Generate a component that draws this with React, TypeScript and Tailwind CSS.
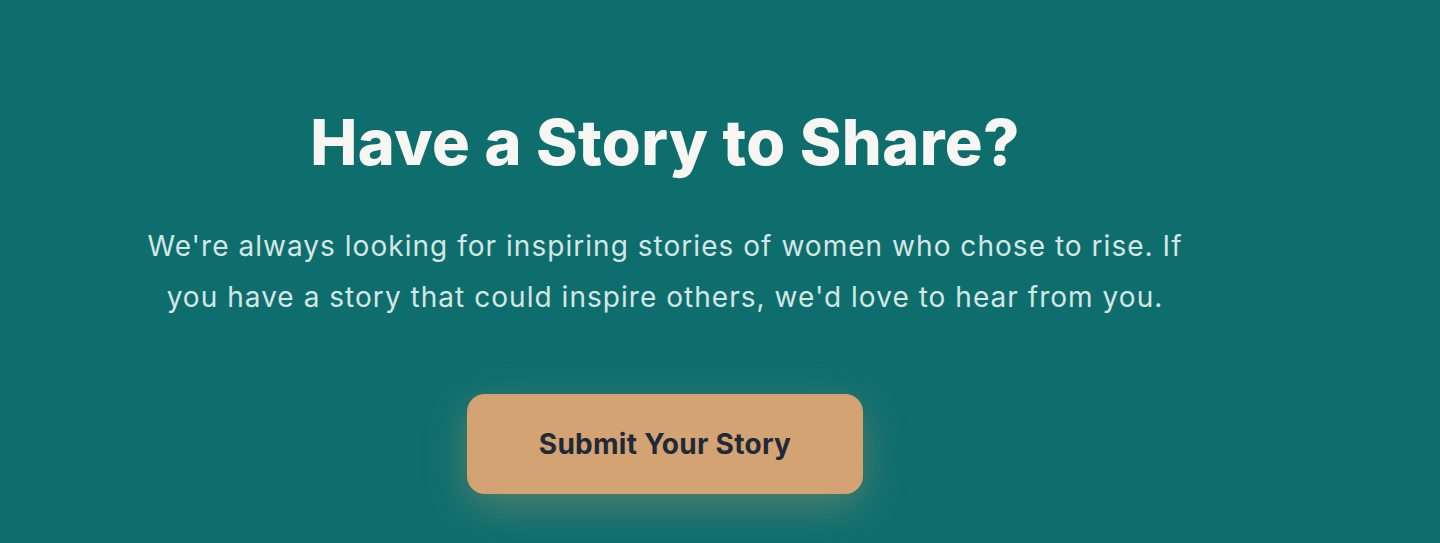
export default function App() {
  return (
    <div className="min-h-[543px] w-full bg-[#0e6e6e] font-['Inter','Noto_Sans',sans-serif]">
      <div className="flex w-[1330px] flex-col items-center pt-[103px] text-center">
        <h2 className="text-[63px] font-extrabold leading-[78px] tracking-[0.006em] text-[#f8f6f2]">
          Have a Story to Share?
        </h2>
        <p className="mt-[40px] max-w-[1060px] text-[28px] leading-[51px] tracking-[0.037em] text-[#d6e6e3]">
          We're always looking for inspiring stories of women who chose to rise. If you have a story that could inspire others, we'd love to hear from you.
        </p>
        <button className="mt-[71px] flex h-[100px] w-[396px] items-center justify-center rounded-[18px] bg-[#d4a373] text-[28px] font-bold tracking-[0.01em] text-[#1f2937] shadow-[0_12px_40px_rgba(212,163,115,0.35)]">
          Submit Your Story
        </button>
      </div>
    </div>
  );
}
